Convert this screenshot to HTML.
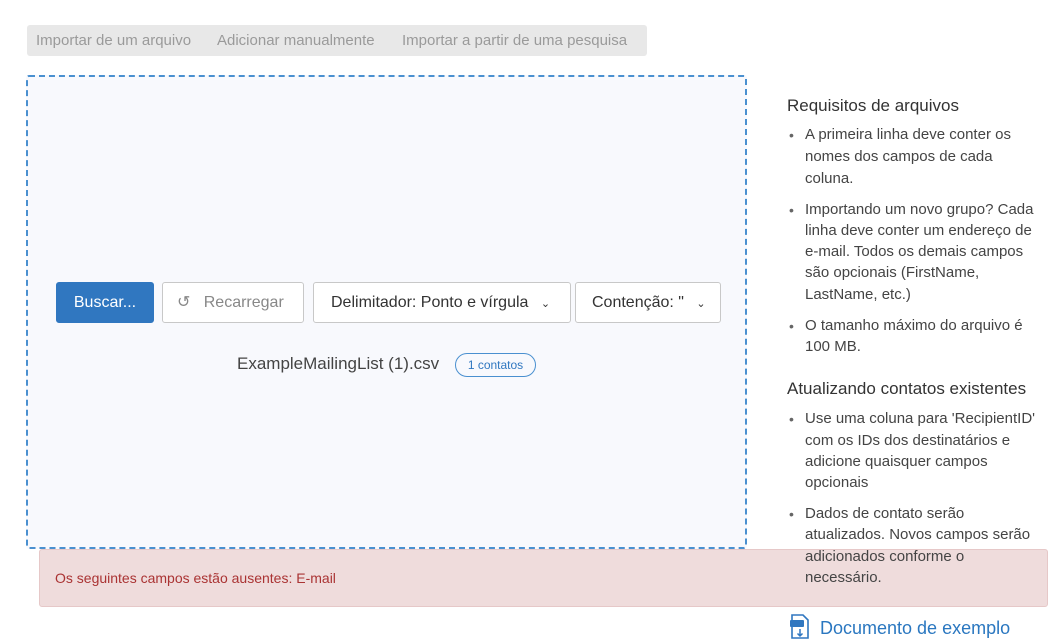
<!DOCTYPE html>
<html><head><meta charset="utf-8"><style>
*{margin:0;padding:0;box-sizing:border-box}
body{width:1064px;height:643px;background:#fff;position:relative;overflow:hidden;font-family:"Liberation Sans",sans-serif;color:#444}
.a{position:absolute;white-space:nowrap}
.tabs{left:27px;top:25px;width:620px;height:31px;background:#e8e8e8;border-radius:3px}
.tab{top:32px;font-size:15px;color:#9a9a9a}
.drop{left:26px;top:75px;width:721px;height:474px;background:#f8f9fd;border:2px dashed #4a90d0;border-radius:3px}
.btn{top:282px;height:41px;border:1px solid #c8c8c8;border-radius:3px;background:#fff;font-size:16px;line-height:39px;color:#333}
.r{font-size:15px;color:#444;left:805px;top:0}
.b{left:789px;font-size:14px;color:#666}
.h{left:787px;font-size:17px;color:#333}
</style></head><body>
<div class="a tabs"></div>
<div class="a tab" style="left:36px">Importar de um arquivo</div>
<div class="a tab" style="left:217px">Adicionar manualmente</div>
<div class="a tab" style="left:402px">Importar a partir de uma pesquisa</div>
<div class="a drop"></div>
<div class="a btn" style="left:56px;width:98px;background:#3077c0;border-color:#3077c0;color:#fff;text-align:center">Buscar...</div>
<div class="a btn" style="left:162px;width:142px;color:#888;padding-left:14px">↺&nbsp;&nbsp; Recarregar</div>
<div class="a btn" style="left:313px;width:258px;padding-left:17px">Delimitador: Ponto e vírgula <span style="font-size:11px;margin-left:8px">&#8964;</span></div>
<div class="a btn" style="left:575px;width:146px;padding-left:16px">Contenção: " <span style="font-size:11px;margin-left:8px">&#8964;</span></div>
<div class="a" style="left:237px;top:354px;font-size:17px;color:#444">ExampleMailingList (1).csv</div>
<div class="a" style="left:455px;top:353px;width:81px;height:24px;border:1px solid #4a90d0;border-radius:12px;font-size:12px;color:#3077c0;text-align:center;line-height:22px">1 contatos</div>
<div class="a" style="left:39px;top:549px;width:1009px;height:58px;background:#efdcdc;border:1px solid #e6c8c8;border-radius:3px"></div>
<div class="a" style="left:55px;top:570px;font-size:14px;color:#a33">Os seguintes campos estão ausentes: E-mail</div>
<div class="a h" style="top:96px">Requisitos de arquivos</div>
<div class="a b" style="top:127px">•</div>
<div class="a r" style="top:126px">A primeira linha deve conter os</div>
<div class="a r" style="top:148px">nomes dos campos de cada</div>
<div class="a r" style="top:170px">coluna.</div>
<div class="a b" style="top:202px">•</div>
<div class="a r" style="top:201px">Importando um novo grupo? Cada</div>
<div class="a r" style="top:222px">linha deve conter um endereço de</div>
<div class="a r" style="top:243px">e-mail. Todos os demais campos</div>
<div class="a r" style="top:264px">são opcionais (FirstName,</div>
<div class="a r" style="top:286px">LastName, etc.)</div>
<div class="a b" style="top:318px">•</div>
<div class="a r" style="top:317px">O tamanho máximo do arquivo é</div>
<div class="a r" style="top:338px">100 MB.</div>
<div class="a h" style="top:379px">Atualizando contatos existentes</div>
<div class="a b" style="top:411px">•</div>
<div class="a r" style="top:410px">Use uma coluna para 'RecipientID'</div>
<div class="a r" style="top:432px">com os IDs dos destinatários e</div>
<div class="a r" style="top:453px">adicione quaisquer campos</div>
<div class="a r" style="top:474px">opcionais</div>
<div class="a b" style="top:506px">•</div>
<div class="a r" style="top:505px">Dados de contato serão</div>
<div class="a r" style="top:526px">atualizados. Novos campos serão</div>
<div class="a r" style="top:548px">adicionados conforme o</div>
<div class="a r" style="top:569px">necessário.</div>
<svg class="a" style="left:790px;top:614px" width="20" height="26" viewBox="0 0 20 26">
<path d="M2 1h11l5 5v18H2z" fill="#fff" stroke="#3077c0" stroke-width="1.6"/>
<rect x="0" y="6" width="14" height="7" rx="1" fill="#3077c0"/>
<path d="M10 15v7M7.5 19.5l2.5 2.5 2.5-2.5" fill="none" stroke="#3077c0" stroke-width="1.5"/>
</svg>
<div class="a" style="left:820px;top:618px;font-size:18px;color:#2a77c0">Documento de exemplo</div>
</body></html>
